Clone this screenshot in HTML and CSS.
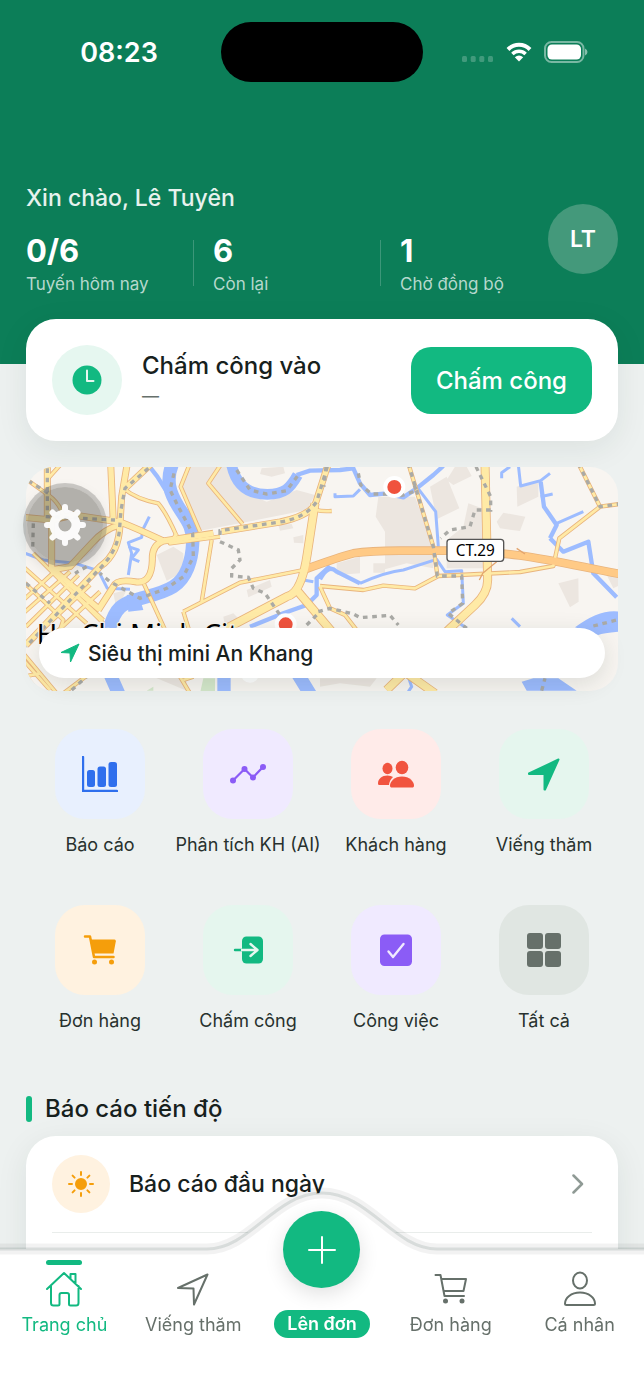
FILE: index.html
```html
<!DOCTYPE html>
<html lang="vi">
<head>
<meta charset="utf-8">
<meta name="viewport" content="width=device-width, initial-scale=1">
<title>Trang chủ</title>
<link rel="stylesheet" href="styles.css">
</head>
<body>
<div class="app">
  <header class="hero">
    <div class="status">
      <time class="status-time">08:23</time>
      <div class="island"></div>
      <div class="status-icons">
        <svg class="signal" viewBox="0 0 32 6" aria-hidden="true"><rect width="5" height="6" rx="1.5"/><rect x="8.700" width="5" height="6" rx="1.5"/><rect x="17.300" width="5" height="6" rx="1.5"/><rect x="26" width="5" height="6" rx="1.5"/></svg>
        <svg class="wifi" viewBox="0 0 28 22" aria-hidden="true"><path d="M3 8.500C9.200 2.300 18.800 2.300 25 8.500" stroke-width="4"/><path d="M7.400 13C11.200 9.400 16.800 9.400 20.600 13" stroke-width="3.600"/><path class="solid" d="M14 20.500 9.800 16.300Q14 12.600 18.200 16.300Z"/></svg>
        <svg class="battery" viewBox="0 0 44 22" aria-hidden="true"><rect class="shell" x="1" y="1" width="38.500" height="20" rx="6.500"/><rect class="charge" x="3.500" y="3.500" width="33.500" height="15" rx="4.500"/><path class="cap" d="M41 7.500Q43.500 8.500 43.500 11T41 14.500Z"/></svg>
      </div>
    </div>
    <div class="intro">
      <div class="intro-text">
        <h1 class="greeting">Xin chào, Lê Tuyên</h1>
        <div class="stats">
          <div class="stat"><strong>0/6</strong><span>Tuyến hôm nay</span></div>
          <i class="rule"></i>
          <div class="stat inset"><strong>6</strong><span>Còn lại</span></div>
          <i class="rule"></i>
          <div class="stat inset"><strong>1</strong><span>Chờ đồng bộ</span></div>
        </div>
      </div>
      <button class="avatar" type="button">LT</button>
    </div>
  </header>

  <main class="content">
    <section class="card checkin">
      <span class="checkin-icon"><svg viewBox="0 0 30 30" aria-hidden="true"><circle cx="15" cy="15" r="14.500" fill="#12b981"/><path d="M15 5.500V16H21.500" fill="none" stroke="#e6f7f0" stroke-width="2" stroke-linecap="round" stroke-linejoin="round"/></svg></span>
      <div class="checkin-text"><h2>Chấm công vào</h2><p>—</p></div>
      <button class="primary" type="button">Chấm công</button>
    </section>

    <section class="map">
      <svg class="map-canvas" viewBox="18 21 1776 672" preserveAspectRatio="xMidYMid slice" aria-hidden="true">
        <defs>
          <g id="minor">
            <path d="M490 455 660 368 850 330M490 455 510 520M545 425 575 240M540 215 482 80 510 10M605 10 565 70 668 192M310 85Q350 118 415 130 440 160 470 228M372 372 440 520M25 62 85 105Q120 130 132 172M125 10 80 60M890 150Q905 155 935 153"/>
            <path d="M10 365 130 480 110 540M10 320 200 490M40 280 250 490M10 420 120 320M10 460 150 335M18 500 175 345M55 520 210 375M95 530 240 395M130 370 250 480M10 600 90 690M10 640 60 700M10 580 110 700M10 650 60 640M130 700 210 640M480 650 510 700M470 220 450 250 600 230"/>
            <path d="M165 10 172 15M1165 10 1240 260 1252 345M900 378 1030 390 1090 377 1185 385 1255 348 1500 336 1600 318 1618 235 1740 140 1800 132M1675 10 1740 140M900 380 930 445 975 465 1010 510M520 650 490 660"/>
          </g>
          <g id="major">
            <path d="M272 10 280 190M322 10 305 110 300 190Q298 280 240 320L18 555M10 172 95 180 160 165 300 186Q350 205 430 243L580 220M605 215 780 186Q880 165 890 120L925 10M95 180V325L240 450M95 330 150 320 215 250Q255 205 300 195M430 243Q395 255 397 300 395 370 350 366 290 355 280 380L235 450M395 10 310 90M82 10V170"/>
          </g>
          <g id="trunk">
            <path d="M885 130 862 280Q845 400 800 410L620 505M830 390 940 520M1395 10 1403 360Q1403 400 1365 435L1290 505 1100 690M1160 640 1245 700"/>
          </g>
          <path id="highway" d="M855 328Q960 290 1000 280 1050 272 1140 272H1280C1500 275 1580 300 1800 342"/>
        </defs>
        <rect class="land" x="0" width="1820" height="720"/>
        <g class="built">
          <path d="M500 20H640L660 90 740 125 830 90 885 105 860 150 660 190 540 212 480 85ZM725 25 790 20 795 40 755 50 720 42ZM410 285 460 260 490 280 492 335 440 362ZM280 400 320 390 290 450ZM680 390 750 360 755 380 685 412ZM775 195 815 192 820 205 780 212ZM820 232 850 225V250L822 248ZM610 470 640 460 660 480 615 500ZM400 650H500V692Z"/>
          <path d="M1075 110H1185L1230 230 1240 325 1160 310 1095 328V215L1067 170ZM1230 80 1280 50 1318 145 1250 178ZM1280 60 1305 20H1340L1355 48 1300 75ZM1490 80 1555 60 1555 110 1492 140ZM1430 185 1450 158 1516 170 1500 213 1440 205ZM1345 130 1400 150V325L1280 325V240L1330 200ZM1615 370 1675 355 1676 425 1650 442ZM1060 310H1095V338H1060ZM950 310 1020 290V340L950 345ZM1760 345 1800 345V375L1780 385ZM900 655H1070L1050 680 960 670 900 680Z"/>
        </g>
        <path class="park" d="M550 655H585V700H540ZM380 692 400 680V692Z"/>
        <g class="water">
          <path class="w40" d="M460 5C435 60 450 100 475 140S520 200 518 250 500 355 460 380 370 410 345 420 290 430 270 500L260 620 300 710M612 640V700M820 620 875 710"/>
          <path class="w32" d="M633 5C645 80 690 103 742 103S810 85 833 45"/>
          <path class="w14" d="M830 45 870 32 960 30 1000 25 1020 70 1050 105 1100 100 1150 112 1190 85 1240 45 1270 18M385 15 412 50 440 95M930 318 890 355V405L860 435 790 460 690 500M900 358Q925 310 950 335L1020 370M1590 235 1610 195 1572 140 1562 65M1590 235 1630 275 1705 245 1720 340 1790 412"/>
          <path class="w8" d="M10 278 70 300 165 310 235 332 262 385 330 388M388 170 368 210 365 232 325 248 335 280 325 345M325 260 355 270 335 295 358 305M945 100V110L1000 108 1020 88M1190 80 1247 155 1255 260M1020 370Q1100 335 1150 330L1250 298 1275 335 1325 332 1330 430 1282 465 1340 505M1445 55V38L1470 20M1495 15 1502 78 1562 62 1590 40M1562 110 1598 102M1610 190 1690 155M1475 475 1500 500M850 360 880 365M1165 650 1175 680 1165 695"/>
          <path class="fill" d="M1665 502Q1740 445 1800 455V515Q1750 520 1735 525ZM1505 665 1540 655H1615L1670 692H1520ZM320 405 355 400 370 450 325 455Z"/>
        </g>
        <g class="case"><use class="s-minor" href="#minor"/><use class="s-major" href="#major"/><use class="s-trunk" href="#trunk"/><use class="s-highway" href="#highway"/></g>
        <g class="road"><use class="s-minor" href="#minor"/><use class="s-major" href="#major"/><use class="s-highway" href="#highway"/><use class="s-trunk" href="#trunk"/></g>
        <path class="ramp" d="M1378 360 1388 340 1430 305M1490 265 1515 282"/>
        <g class="rail">
          <path d="M82 25V170L285 180M385 25 315 85 303 150 298 215Q290 275 240 325L18 560M25 62 85 100M40 190 38 265M18 370 90 430M200 320 165 340M600 225 600 212 780 186Q855 175 890 125L922 20M600 245 655 270 660 300 635 325 635 348 685 352 700 385 735 400 780 465"/>
          <path d="M462 40 450 90 475 140 518 220 520 290 490 350 440 385 360 415 270 365 240 340M650 30 690 90 740 102 800 92 835 45M918 20 912 80M1015 40 1022 75 1055 102 1110 102M1140 108 1190 92 1180 70M1165 10 1240 260 1252 348 1325 348 1328 430 1285 460 1340 505M1675 10 1740 140 1800 132M1368 20 1412 110V150L1365 150 1350 200 1290 210 1262 235M895 455 930 445 1000 462 1020 473 1110 466 1135 495M860 495 900 455M1720 498 1790 480M1565 692 1575 655M155 690 200 650"/>
        </g>
        <text class="city" x="50" y="552">Ho Chi Minh City</text>
        <g class="shield"><rect x="1281" y="238" width="170" height="66" rx="9"/><text x="1366" y="288">CT.29</text></g>
        <g class="pin"><circle cx="1123" cy="81" r="27"/><circle cx="797" cy="493" r="27"/></g>
        <circle cx="690" cy="640" r="28" fill="#fff"/>
      </svg>
      <div class="place">
        <svg viewBox="0 0 20 20" aria-hidden="true"><path d="M19 1 10.500 19 10 10 1 9.500Z" fill="#12b981" stroke="#12b981" stroke-linejoin="round"/></svg>
        <span>Siêu thị mini An Khang</span>
      </div>
      <button class="settings" type="button" aria-label="Cài đặt">
        <svg viewBox="-21 -21 42 42" aria-hidden="true"><circle r="11" stroke-width="9"/><path d="M0-14V-18M0 14V18M-14 0H-18M14 0H18M-10-10-12.500-12.500M10-10 12.500-12.500M-10 10-12.500 12.500M10 10 12.500 12.500" stroke-width="6" stroke-linecap="round"/></svg>
      </button>
    </section>

    <nav class="shortcuts" aria-label="Tiện ích">
      <a href="#"><span class="tile blue"><svg viewBox="0 0 36 36" aria-hidden="true"><path d="M1 1V35H35" fill="none" stroke="currentColor" stroke-width="2.400" stroke-linecap="round" stroke-linejoin="round"/><rect x="5" y="14" width="8" height="17" rx="2.500"/><rect x="15.500" y="10.500" width="8.500" height="20.500" rx="2.500"/><rect x="26.500" y="6" width="8.500" height="25" rx="2.500"/></svg></span>Báo cáo</a>
      <a href="#"><span class="tile violet"><svg viewBox="0 0 36 36" aria-hidden="true"><path d="M3 24.500 14.500 13 23 21.500 33 11" fill="none" stroke="currentColor" stroke-width="2.200"/><circle cx="3" cy="24.500" r="3"/><circle cx="14.500" cy="13" r="3"/><circle cx="23" cy="21.500" r="3"/><circle cx="33" cy="11" r="3"/></svg></span>Phân tích KH (AI)</a>
      <a href="#"><span class="tile red"><svg viewBox="0 0 36 36" aria-hidden="true"><ellipse cx="9.500" cy="12.500" rx="5" ry="5.700"/><path d="M2 29C.5 29 0 28.500 0 27.500 0 23 4 19.500 9.500 19.500Q13 19.500 15 21 11.500 24 11 29Z"/><ellipse cx="24" cy="11.500" rx="6.300" ry="6.800"/><path d="M24 20.500C31.500 20.500 36 25.500 36 29.500 36 31 35.500 31.500 34 31.500H14C12.500 31.500 12 31 12 29.500 12 25.500 16.500 20.500 24 20.500Z"/></svg></span>Khách hàng</a>
      <a href="#"><span class="tile mint"><svg viewBox="0 0 36 36" aria-hidden="true"><path d="M32.500 3.500 19 33.500H18.500V18H3V17.500Z" stroke="currentColor" stroke-width="2" stroke-linejoin="round"/></svg></span>Viếng thăm</a>
      <a href="#"><span class="tile orange"><svg viewBox="0 0 36 36" aria-hidden="true"><path d="M3 4.500H8L12 25H31.500" fill="none" stroke="currentColor" stroke-width="2.500" stroke-linecap="round" stroke-linejoin="round"/><path d="M9 7.500H32.500Q34 7.500 33.800 9.500L31.500 21.500H11.500Z"/><circle cx="12.500" cy="30" r="2.500"/><circle cx="29.500" cy="30" r="2.500"/></svg></span>Đơn hàng</a>
      <a href="#"><span class="tile mint"><svg viewBox="0 0 36 36" aria-hidden="true"><rect x="12" y="4.500" width="21" height="27" rx="4.500"/><path d="M5 18H12" stroke="currentColor" stroke-width="2.400" stroke-linecap="round"/><path d="M12 18H27M20.500 12 27.500 18 20.500 24" fill="none" stroke="#e6f7f0" stroke-width="2.400" stroke-linecap="round" stroke-linejoin="round"/></svg></span>Chấm công</a>
      <a href="#"><span class="tile violet"><svg viewBox="0 0 36 36" aria-hidden="true"><rect x="2" y="2.500" width="32" height="31.500" rx="4.500"/><path d="M10.500 19.500 15 25 25.500 12" fill="none" stroke="#f0eaff" stroke-width="2.400" stroke-linecap="round" stroke-linejoin="round"/></svg></span>Công việc</a>
      <a href="#"><span class="tile gray"><svg viewBox="0 0 36 36" aria-hidden="true"><rect x="1" y="1" width="16" height="16" rx="3"/><rect x="19" y="1" width="16" height="16" rx="3"/><rect x="1" y="19" width="16" height="16" rx="3"/><rect x="19" y="19" width="16" height="16" rx="3"/></svg></span>Tất cả</a>
    </nav>

    <section>
      <h2 class="section-title">Báo cáo tiến độ</h2>
      <div class="card reports">
        <a class="report" href="#">
          <span class="sun"><svg viewBox="-13 -13 26 26" aria-hidden="true"><circle r="5"/><path d="M0-9V-12M0 9V12M-9 0H-12M9 0H12M-6.400-6.400-8.400-8.400M6.400-6.400 8.400-8.400M-6.400 6.400-8.400 8.400M6.400 6.400 8.400 8.400"/></svg></span>
          <span class="report-name">Báo cáo đầu ngày</span>
          <svg class="chevron" viewBox="0 0 12 20" aria-hidden="true"><path d="M1.500 1.500 10 10 1.500 18.500"/></svg>
        </a>
      </div>
    </section>
  </main>

  <nav class="tabs" aria-label="Điều hướng chính">
    <svg class="tabs-shape" viewBox="0 0 644 214" preserveAspectRatio="none" aria-hidden="true">
      <path fill="#fff" d="M0 63H207C250 63 275 7 322 7S394 63 437 63H644V214H0Z"/>
      <path class="edge-soft" d="M-9 63H207C250 63 275 7 322 7S394 63 437 63H653"/>
      <path class="edge" d="M-9 63H207C250 63 275 7 322 7S394 63 437 63H653"/>
    </svg>
    <a class="tab active" href="#"><svg viewBox="0 0 36 36" aria-hidden="true"><path d="M1 18 18 2 35 18M5 15V32Q5 34.500 7.500 34.500H12Q13.500 34.500 13.500 33V24Q13.500 22 15.500 22H21Q23 22 23 24V33Q23 34.500 24.500 34.500H30Q32.500 34.500 32.500 32V15M24.500 7.500V3H29.500V12"/></svg>Trang chủ</a>
    <a class="tab" href="#"><svg viewBox="0 0 36 36" aria-hidden="true"><path d="M32.500 3.500 19 33.500 18.500 17.500 3 17Z"/></svg>Viếng thăm</a>
    <a class="tab create" href="#"><span class="fab"><svg viewBox="0 0 28 28" aria-hidden="true"><path d="M14 1V27M1 14H27"/></svg></span><span class="pill">Lên đơn</span></a>
    <a class="tab" href="#"><svg viewBox="0 0 36 36" aria-hidden="true"><path d="M2.500 4H7.500L11.500 25H31M8.500 8H33L30.500 20H10.500"/><circle class="dot" cx="12.500" cy="30" r="2.500"/><circle class="dot" cx="29" cy="30" r="2.500"/></svg>Đơn hàng</a>
    <a class="tab" href="#"><svg viewBox="0 0 36 36" aria-hidden="true"><ellipse cx="18" cy="9.500" rx="7" ry="8"/><path d="M18 21.500C27 21.500 33 27 33 32.500Q33 34 31.500 34H4.500Q3 34 3 32.500C3 27 9 21.500 18 21.500Z"/></svg>Cá nhân</a>
  </nav>
</div>
</body>
</html>
```
FILE: styles.css
```css
* { box-sizing: border-box; }

body {
  margin: 0;
  background: #edf1f0;
  color: #17211d;
  font-family: Inter, "Noto Sans", sans-serif;
}

h1, h2, p { margin: 0; }
a { color: inherit; text-decoration: none; }
button { border: 0; padding: 0; font-family: inherit; cursor: pointer; }
svg { display: block; }

.app { min-height: 100vh; }

/* Header */
.hero { padding-bottom: 68px; background: #0c7e58; color: #fff; }

.status {
  display: grid;
  grid-template-columns: 1fr 202px 1fr;
  align-items: center;
  padding-top: 22px;
}
.status-time { padding-left: 17px; text-align: center; font-size: 27px; font-weight: 600; }
.island { height: 60px; border-radius: 30px; background: #000; }
.status-icons { display: flex; align-items: center; gap: 11px; padding-left: 39px; }
.signal { width: 32px; height: 6px; margin-top: 14px; fill: rgba(255, 255, 255, .22); }
.wifi { width: 28px; height: 22px; fill: none; stroke: #fff; }
.wifi .solid { fill: #fff; stroke: none; }
.battery { width: 44px; height: 22px; }
.shell { fill: none; stroke: rgba(255, 255, 255, .45); stroke-width: 2; }
.charge { fill: #fff; }
.cap { fill: rgba(255, 255, 255, .5); }

.intro { display: flex; align-items: center; padding: 100px 26px 0; }
.intro-text { flex: 1; display: flex; flex-direction: column; gap: 20px; }
.greeting { font-size: 23px; font-weight: 500; line-height: 32px; color: #e7f2ee; }
.stats { display: grid; grid-template-columns: 32% 1px calc(32% + 19px) 1px 1fr; align-items: start; }
.rule { height: 46px; margin-top: 6px; background: rgba(255, 255, 255, .2); }
.stat { display: flex; flex-direction: column; gap: 4px; white-space: nowrap; }
.inset { padding-left: 19px; }
.stat strong { font-size: 31px; font-weight: 700; line-height: 34px; }
.stat span { font-size: 17px; line-height: 24px; color: #b6d8cd; }
.avatar {
  width: 70px;
  height: 70px;
  border-radius: 50%;
  background: #44997b;
  color: #fff;
  font-size: 23px;
  font-weight: 600;
}

/* Content */
.content { margin-top: -45px; padding: 0 26px; }
.card { border-radius: 30px; background: #fff; box-shadow: 0 8px 32px rgba(20, 50, 40, .08); }

.checkin { display: flex; align-items: center; gap: 20px; padding: 26px; }
.checkin-icon {
  display: grid;
  place-items: center;
  width: 70px;
  height: 70px;
  border-radius: 50%;
  background: #e6f7f0;
}
.checkin-icon svg { width: 30px; height: 30px; }
.checkin-text { flex: 1; }
.checkin-text h2 { font-size: 24px; font-weight: 500; line-height: 32px; }
.checkin-text p { font-size: 17px; line-height: 28px; color: #66706b; }
.primary {
  padding: 0 25px;
  border-radius: 20px;
  background: #12b981;
  color: #fff;
  font-size: 24px;
  font-weight: 500;
  line-height: 67px;
}

.map {
  position: relative;
  display: flex;
  flex-direction: column;
  justify-content: flex-end;
  height: 224px;
  margin-top: 26px;
  padding: 13px;
}
.map-canvas { position: absolute; inset: 0; width: 100%; height: 100%; border-radius: 28px; }
.place {
  position: relative;
  display: flex;
  align-items: center;
  gap: 8px;
  height: 50px;
  padding: 0 21px;
  border-radius: 25px;
  background: #fff;
  box-shadow: 0 6px 24px rgba(20, 40, 30, .12);
  font-size: 21px;
  font-weight: 500;
}
.place svg { width: 20px; height: 20px; }
.settings {
  position: absolute;
  top: 20px;
  left: 1px;
  display: grid;
  place-items: center;
  width: 76px;
  height: 76px;
  border-radius: 50%;
  background: rgba(80, 80, 75, .42);
  box-shadow: 0 0 0 4px rgba(100, 100, 95, .3), 0 6px 16px rgba(0, 0, 0, .15);
}
.settings svg { width: 42px; height: 42px; fill: none; stroke: #fff; opacity: .95; }

.land { fill: #f8f5f1; }
.built { fill: #ece6e0; }
.park { fill: #d5e8cb; }
.water { fill: none; stroke: #9dbcff; stroke-linejoin: round; }
.water .fill { fill: #9dbcff; stroke: none; }
.w40 { stroke-width: 40; }
.w32 { stroke-width: 32; }
.w14 { stroke-width: 13; }
.w8 { stroke-width: 9; }
.case, .road { fill: none; stroke-linejoin: round; }
.case { stroke: #e9b47d; }
.case .s-minor { stroke-width: 13; }
.case .s-major { stroke-width: 21; }
.case .s-trunk { stroke-width: 27; }
.case .s-highway { stroke-width: 26; }
.road { stroke: #ffeaa6; }
.road .s-minor { stroke-width: 8; }
.road .s-major { stroke-width: 16; }
.road .s-trunk { stroke-width: 22; }
.road .s-highway { stroke: #ffca86; stroke-width: 21; }
.ramp { fill: none; stroke: #e2a46e; stroke-width: 4; }
.rail { fill: none; stroke: #aaaaa6; stroke-width: 10; stroke-dasharray: 14 14; }
.city { fill: #000; stroke: #f8f5f1; stroke-width: 8; paint-order: stroke; font: 83px "Noto Sans", sans-serif; }
.shield rect { fill: #fff; stroke: #555; stroke-width: 4; }
.shield text { font: 46px "Noto Sans", sans-serif; text-anchor: middle; }
.pin { fill: #f0523d; stroke: #fff; stroke-width: 12; }

.shortcuts {
  display: grid;
  grid-template-columns: repeat(4, 1fr);
  row-gap: 48px;
  margin-top: 38px;
  font-size: 18px;
  line-height: 24px;
  color: #28312e;
}
.shortcuts a { display: flex; flex-direction: column; align-items: center; gap: 14px; white-space: nowrap; }
.tile { display: grid; place-items: center; width: 90px; height: 90px; border-radius: 30px; }
.tile svg { width: 36px; height: 36px; fill: currentColor; }
.blue { background: #e8f0fe; color: #2f6fed; }
.violet { background: #f0eaff; color: #8b5cf6; }
.red { background: #ffebe9; color: #f1543f; }
.mint { background: #e5f6ee; color: #12b981; }
.orange { background: #fff2e0; color: #f59e0b; }
.gray { background: #e0e6e2; color: #66706a; }

.section-title {
  display: flex;
  align-items: center;
  gap: 13px;
  margin-top: 60px;
  font-size: 24px;
  font-weight: 500;
  line-height: 32px;
}
.section-title::before { content: ""; width: 6px; height: 26px; border-radius: 3px; background: #12b981; }

.reports { margin-top: 11px; padding: 0 26px 72px; }
.report { display: flex; align-items: center; gap: 19px; height: 97px; border-bottom: 1px solid #e9edeb; }
.sun { display: grid; place-items: center; width: 58px; height: 58px; border-radius: 50%; background: #fff2e0; }
.sun svg { width: 26px; height: 26px; fill: #f59e0b; stroke: #f59e0b; stroke-width: 2; stroke-linecap: round; }
.report-name { flex: 1; font-size: 23px; font-weight: 500; }
.chevron { width: 12px; height: 20px; margin-right: 8px; fill: none; stroke: #8f9a95; stroke-width: 2.5; stroke-linecap: round; stroke-linejoin: round; }

/* Bottom tab bar */
.tabs {
  position: fixed;
  inset: auto 0 0;
  display: grid;
  grid-template-columns: repeat(5, 1fr);
  height: 214px;
  color: #66706a;
  font-size: 18px;
  line-height: 24px;
}
.tabs-shape { position: absolute; inset: 0; width: 100%; height: 100%; }
.edge-soft, .edge { fill: none; }
.edge-soft { stroke: rgba(0, 0, 0, .05); stroke-width: 11; }
.edge { stroke: rgba(40, 70, 60, .13); stroke-width: 3; }
.tab {
  position: relative;
  display: flex;
  flex-direction: column;
  align-items: center;
  gap: 6px;
  padding-top: 85px;
  white-space: nowrap;
}
.tab > svg { width: 36px; height: 36px; fill: none; stroke: currentColor; stroke-width: 2; stroke-linecap: round; stroke-linejoin: round; }
.tab .dot { fill: currentColor; stroke: none; }
.active { color: #12b981; }
.active::before { content: ""; position: absolute; top: 74px; width: 36px; height: 5px; border-radius: 3px; background: #12b981; }
.create { gap: 22px; padding-top: 25px; }
.fab {
  display: grid;
  place-items: center;
  width: 77px;
  height: 77px;
  border-radius: 50%;
  background: #12b981;
  box-shadow: 0 6px 20px rgba(0, 0, 0, .12);
}
.fab svg { width: 28px; height: 28px; stroke: #fff; stroke-width: 2; stroke-linecap: round; }
.pill { padding: 2px 13px; border-radius: 14px; background: #12b981; color: #fff; font-weight: 600; }
```
